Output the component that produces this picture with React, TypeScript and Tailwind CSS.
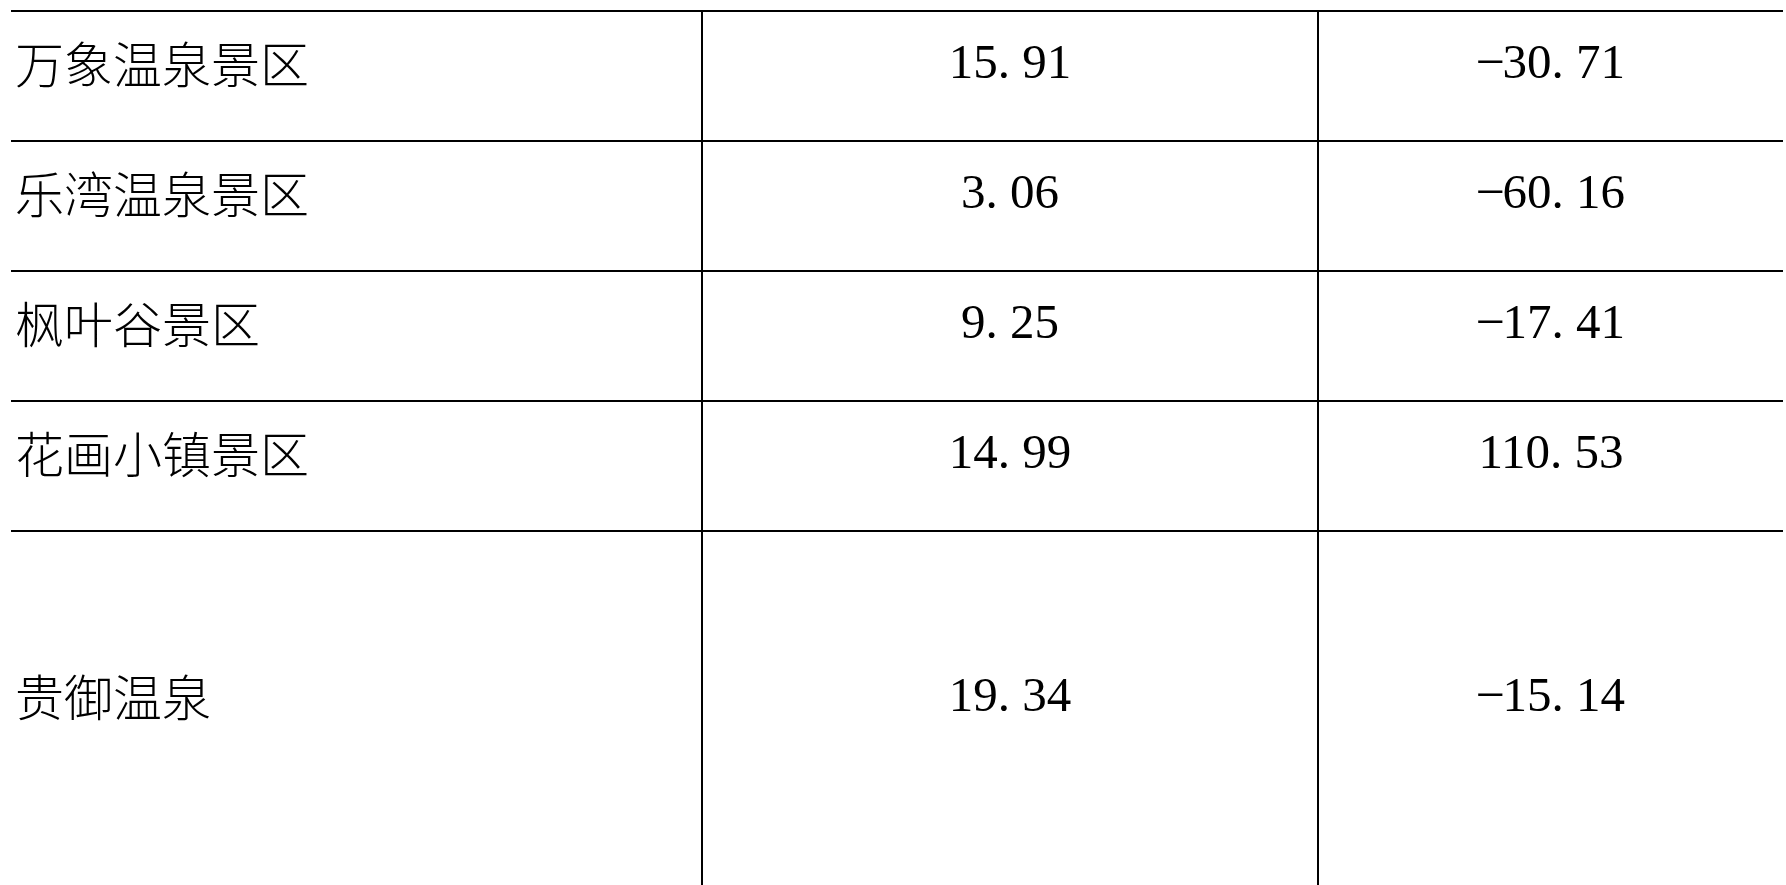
import React from "react";

const rows = [
  { name: "万象温泉景区", a: "15.91", b: "-30.71", h: "h-[130px]" },
  { name: "乐湾温泉景区", a: "3.06", b: "-60.16", h: "h-[130px]" },
  { name: "枫叶谷景区", a: "9.25", b: "-17.41", h: "h-[130px]" },
  { name: "花画小镇景区", a: "14.99", b: "110.53", h: "h-[130px]" },
  { name: "贵御温泉", a: "19.34", b: "-15.14", h: "h-[356px]" },
];

function Num({ v }: { v: string }) {
  const neg = v.startsWith("-");
  const body = neg ? v.slice(1) : v;
  const [i, d] = body.split(".");
  return (
    <span className="whitespace-nowrap">
      {neg && (
        <span className="inline-block w-[0.52em] text-center">
          <span className="inline-block origin-center -translate-y-[3px] scale-x-[1.9] scale-y-[0.7]">-</span>
        </span>
      )}
      {i}
      <span className="inline-block w-[0.5em] text-left">.</span>
      {d}
    </span>
  );
}

export default function App() {
  return (
    <div className="h-[885px] w-[1786px] overflow-hidden bg-white text-black">
      <div className="ml-[11px] mt-[10px] w-[1772px]">
        {rows.map((r) => (
          <div
            key={r.name}
            className={`grid grid-cols-[690px_616px_466px] border-t-2 border-black ${r.h}`}
          >
            <div
              className="flex items-center pb-[30px] pl-[4px] text-[49px] leading-none font-light"
              style={{ fontFamily: '"Noto Sans CJK SC", sans-serif' }}
            >
              {r.name}
            </div>
            <div
              className="flex items-center justify-center border-l-2 border-black pb-[30px] text-[49px] leading-none"
              style={{ fontFamily: '"Liberation Serif", serif' }}
            >
              <Num v={r.a} />
            </div>
            <div
              className="flex items-center justify-center border-l-2 border-black pb-[30px] text-[49px] leading-none"
              style={{ fontFamily: '"Liberation Serif", serif' }}
            >
              <Num v={r.b} />
            </div>
          </div>
        ))}
      </div>
    </div>
  );
}
